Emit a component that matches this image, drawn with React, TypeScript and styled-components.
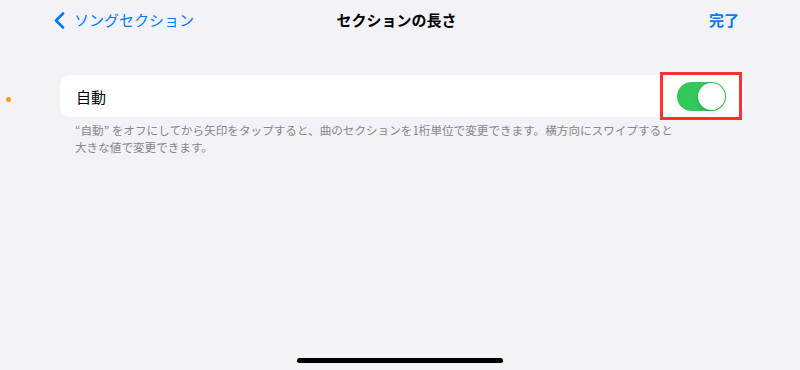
import React from 'react'
import styled, { createGlobalStyle } from 'styled-components'

const GlobalStyle = createGlobalStyle`
  html, body {
    margin: 0;
    padding: 0;
    background: #f2f2f7;
    font-family: 'Noto Sans CJK JP', 'Noto Sans', sans-serif;
  }
`

const Page = styled.div`
  position: relative;
  width: 800px;
  height: 370px;
  display: flex;
  flex-direction: column;
  background: #f2f2f7;
  overflow: hidden;
`

const NavBar = styled.div`
  display: grid;
  grid-template-columns: 1fr auto 1fr;
  align-items: center;
  height: 40px;
  padding: 0 61px 0 54px;
`

const BackButton = styled.div`
  display: flex;
  align-items: center;
  gap: 9px;
  color: #007aff;
  font-size: 15px;
  line-height: 20px;
`

const Title = styled.div`
  font-size: 15px;
  font-weight: 700;
  color: #000;
  line-height: 20px;
`

const DoneButton = styled.div`
  justify-self: end;
  color: #007aff;
  font-size: 15px;
  font-weight: 600;
  line-height: 20px;
`

const Content = styled.div`
  padding: 35px 56px 0 60px;
`

const Card = styled.div`
  display: flex;
  align-items: center;
  height: 42px;
  background: #fff;
  border-radius: 10px;
  padding-left: 16px;
`

const Label = styled.div`
  flex: 1;
  font-size: 15px;
  color: #000;
`

const Highlight = styled.div`
  box-sizing: border-box;
  width: 82px;
  height: 48px;
  margin-right: 2px;
  border: 3.5px solid #ff3030;
  display: flex;
  align-items: center;
  justify-content: center;
  flex-shrink: 0;
`

const Switch = styled.div<{ $on: boolean }>`
  position: relative;
  width: 49px;
  height: 29px;
  border-radius: 15px;
  background: ${(p) => (p.$on ? '#34c759' : '#e9e9ea')};
`

const Knob = styled.div<{ $on: boolean }>`
  position: absolute;
  top: 1px;
  ${(p) => (p.$on ? 'right: 1px;' : 'left: 1px;')}
  width: 27px;
  height: 27px;
  border-radius: 50%;
  background: #fff;
  box-shadow: 0 2px 4px rgba(0, 0, 0, 0.15);
`

const Footnote = styled.p`
  margin: 5px 0 0 15px;
  font-size: 11.6px;
  line-height: 17px;
  color: #86868b;
`

const Marker = styled.div`
  position: absolute;
  left: 6px;
  top: 97px;
  width: 5px;
  height: 5px;
  border-radius: 50%;
  background: #ff9f0a;
`

const HomeIndicator = styled.div`
  margin: auto auto 7px;
  width: 206px;
  height: 5px;
  border-radius: 3px;
  background: #000;
`

const Chevron = () => (
  <svg width="11" height="17" viewBox="0 0 11 17">
    <path
      d="M9 1.5 L2 8.5 L9 15.5"
      fill="none"
      stroke="#007aff"
      strokeWidth="2.6"
      strokeLinecap="round"
      strokeLinejoin="round"
    />
  </svg>
)

const App = () => {
  const auto = true
  return (
    <Page>
      <GlobalStyle />
      <NavBar>
        <BackButton>
          <Chevron />
          ソングセクション
        </BackButton>
        <Title>セクションの長さ</Title>
        <DoneButton>完了</DoneButton>
      </NavBar>
      <Content>
        <Card>
          <Label>自動</Label>
          <Highlight>
            <Switch $on={auto}>
              <Knob $on={auto} />
            </Switch>
          </Highlight>
        </Card>
        <Footnote>
          “自動” をオフにしてから矢印をタップすると、曲のセクションを1桁単位で変更できます。横方向にスワイプすると
          <br />
          大きな値で変更できます。
        </Footnote>
      </Content>
      <Marker />
      <HomeIndicator />
    </Page>
  )
}

export default App
